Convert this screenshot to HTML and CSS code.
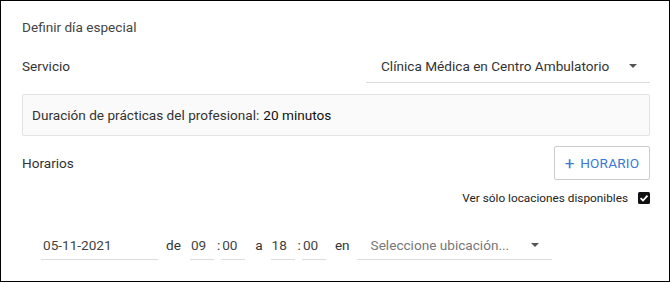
FILE: index.html
```html
<!DOCTYPE html>
<html lang="es">
<head>
    <meta charset="UTF-8">
    <meta name="viewport" content="width=device-width, initial-scale=1.0">
    <title>Definir día especial</title>
    <link rel="stylesheet" href="styles.css">
</head>
<body>
    <div class="dialog">
        <h2 class="dialog-title">Definir día especial</h2>

        <div class="service-row">
            <span class="label">Servicio</span>
            <div class="select service-select">
                <span class="select-value">Clínica Médica en Centro Ambulatorio</span>
                <span class="select-arrow"></span>
            </div>
        </div>

        <div class="info-box">
            Duración de prácticas del profesional: <strong>20 minutos</strong>
        </div>

        <div class="hours-row">
            <span class="label">Horarios</span>
            <button type="button" class="btn-outline"><span class="plus">+</span> HORARIO</button>
        </div>

        <div class="filter-row">
            <span>Ver sólo locaciones disponibles</span>
            <span class="checkbox">
                <svg width="12" height="12" viewBox="0 0 12 12">
                    <rect width="12" height="12" rx="1.5" fill="#111"/>
                    <path d="M2.6 6.2 L5 8.5 L9.5 3.6" stroke="#fff" stroke-width="1.8" fill="none"/>
                </svg>
            </span>
        </div>

        <div class="slot-row">
            <div class="field date-field">05-11-2021</div>
            <span class="word">de</span>
            <div class="field time-field">09</div>
            <span class="colon">:</span>
            <div class="field time-field">00</div>
            <span class="word word-a">a</span>
            <div class="field time-field">18</div>
            <span class="colon">:</span>
            <div class="field time-field">00</div>
            <span class="word word-en">en</span>
            <div class="select place-select">
                <span class="select-value placeholder">Seleccione ubicación...</span>
                <span class="select-arrow"></span>
            </div>
        </div>
    </div>
</body>
</html>
```

FILE: styles.css
```css
* {
    margin: 0;
    padding: 0;
    box-sizing: border-box;
    font-family: 'Roboto', 'Liberation Sans', sans-serif;
}

body {
    background-color: white;
    color: #333;
    font-size: 13.6px;
}

.dialog {
    width: 670px;
    height: 282px;
    border: 1px solid #000;
    padding: 0 19px 0 21px;
}

.dialog-title {
    font-size: 13.6px;
    font-weight: normal;
    color: #444;
    padding-top: 18px;
    line-height: 17px;
}

.label {
    color: #333;
}

.service-row {
    display: flex;
    justify-content: space-between;
    align-items: center;
    margin-top: 13px;
}

.select {
    display: flex;
    align-items: center;
    border-bottom: 1px solid #ddd;
    height: 34px;
}

.service-select {
    width: 284px;
    padding: 0 13px 0 15px;
    justify-content: space-between;
}

.select-value {
    color: #333;
}

.select-value.placeholder {
    color: #777;
}

.select-arrow {
    width: 0;
    height: 0;
    border-left: 4px solid transparent;
    border-right: 4px solid transparent;
    border-top: 4px solid #555;
}

.info-box {
    margin-top: 11px;
    height: 42px;
    display: flex;
    align-items: center;
    padding-left: 9px;
    background-color: #fafafa;
    border: 1px solid #e3e3e3;
    border-radius: 2px;
    color: #333;
}

.info-box strong {
    font-weight: normal;
    color: #111;
    margin-left: 4px;
}

.hours-row {
    display: flex;
    justify-content: space-between;
    align-items: center;
    margin-top: 9px;
}

.btn-outline {
    width: 96px;
    height: 34px;
    margin-top: 1px;
    background: white;
    border: 1px solid #ccc;
    border-radius: 2px;
    color: #3b78d8;
    font-size: 13.6px;
    letter-spacing: 0.2px;
    cursor: pointer;
}

.btn-outline .plus {
    font-size: 17px;
    vertical-align: -1px;
    margin-right: 2px;
}

.filter-row {
    display: flex;
    justify-content: flex-end;
    align-items: center;
    gap: 10px;
    margin-top: 11px;
    font-size: 11.8px;
    color: #222;
}

.checkbox {
    display: flex;
}

.slot-row {
    display: flex;
    align-items: center;
    margin-top: 25px;
    padding-left: 19px;
}

.field {
    height: 30px;
    display: flex;
    align-items: center;
    border-bottom: 1px solid #ddd;
    color: #444;
}

.date-field {
    width: 117px;
    padding-left: 2px;
}

.time-field {
    width: 24px;
    padding-left: 1px;
}

.word {
    margin: 0 9px 0 8px;
}

.word-a {
    margin: 0 8px 0 10px;
}

.word-en {
    margin: 0 7px 0 9px;
}

.colon {
    margin: 0 1px 0 3px;
}

.place-select {
    width: 195px;
    height: 30px;
    padding: 0 13px 0 14px;
    justify-content: space-between;
}
```
